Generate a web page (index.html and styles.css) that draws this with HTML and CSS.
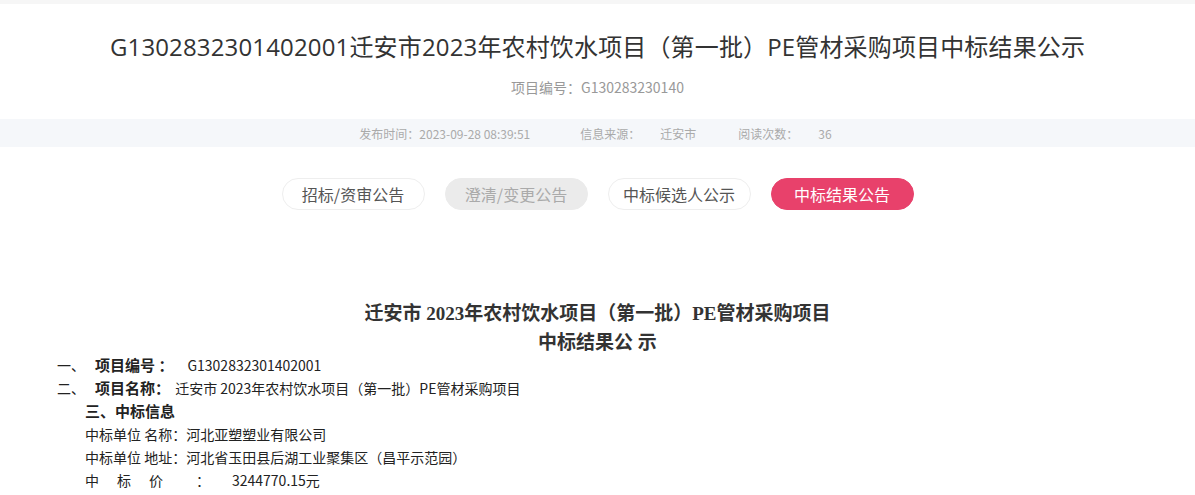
FILE: index.html
```html
<!DOCTYPE html>
<html lang="zh-CN">
<head>
  <meta charset="UTF-8">
  <meta name="viewport" content="width=device-width, initial-scale=1.0">
  <title>中标结果公示</title>
  <link rel="stylesheet" href="styles.css">
</head>
<body>
  <div class="topbar"></div>

  <header class="detail-head">
    <h1>G1302832301402001迁安市2023年农村饮水项目（第一批）PE管材采购项目中标结果公示</h1>
    <p class="proj-no">项目编号：G130283230140</p>
  </header>

  <div class="meta">
    <span class="meta-item">发布时间：2023-09-28 08:39:51</span>
    <span class="meta-item">信息来源：<em>迁安市</em></span>
    <span class="meta-item">阅读次数：<em>36</em></span>
  </div>

  <nav class="tabs">
    <a href="#">招标/资审公告</a>
    <a href="#" class="disabled">澄清/变更公告</a>
    <a href="#">中标候选人公示</a>
    <a href="#" class="active">中标结果公告</a>
  </nav>

  <main class="article">
    <h2>迁安市 2023年农村饮水项目（第一批）PE管材采购项目<br>中标结果公 示</h2>
    <p class="row"><span class="num">一、</span><b class="wide">项目编号 ：</b>G1302832301402001</p>
    <p class="row"><span class="num">二、</span><b>项目名称：</b> 迁安市 2023年农村饮水项目（第一批）PE管材采购项目</p>
    <p class="row sub"><b>三、中标信息</b></p>
    <p class="row sub">中标单位 名称：河北亚塑塑业有限公司</p>
    <p class="row sub">中标单位 地址：河北省玉田县后湖工业聚集区（昌平示范园）</p>
    <p class="row sub price"><span>中</span><span>标</span><span>价</span><span>：</span><span>3244770.15元</span></p>
  </main>
</body>
</html>
```

FILE: styles.css
```css
* { box-sizing: border-box; }
body { margin: 0; font-family: "Noto Sans CJK SC", sans-serif; color: #333; background: #fff; }
.topbar { height: 4px; background: #f6f6f6; }

.detail-head { text-align: center; padding-top: 26px; padding-bottom: 22px; }
.detail-head h1 { margin: 0; font-size: 24px; line-height: 34px; font-weight: normal; color: #333; letter-spacing: 0.15px; font-family: "Open Sans", "Noto Sans CJK SC", sans-serif; }
.proj-no { margin: 13px 0 0; font-size: 14px; line-height: 20px; color: #999; }

.meta { height: 28px; background: #f5f7fa; display: flex; justify-content: center; align-items: center; font-size: 12px; color: #aaa; padding-right: 4px; }
.meta-item + .meta-item { margin-left: 50px; }
.meta-item:last-child { margin-left: 42px; }
.meta-item em { font-style: normal; margin-left: 20px; }

.tabs { display: flex; justify-content: center; gap: 20px; margin-top: 31px; }
.tabs a { width: 143px; height: 32px; line-height: 30px; border: 1px solid #eee; border-radius: 16px; text-align: center; font-size: 16px; color: #555; text-decoration: none; background: #fff; }
.tabs a.disabled { background: #ebebeb; border-color: #ebebeb; color: #aaa; }
.tabs a.active { background: #e8416b; border-color: #e8416b; color: #fff; }

.article { padding: 89px 0 0 57px; font-size: 14px; color: #222; }
.article h2 { margin: 0 0 -3px -57px; text-align: center; font-size: 19px; line-height: 29px; font-family: "Liberation Serif", "Noto Sans CJK SC", serif; color: #333; }
.row { margin: 0; height: 23px; line-height: 23px; }
.row .num { margin-right: 10px; }
.row b { font-size: 15px; line-height: 1; margin-right: 2px; }
.row b.wide { margin-right: 14px; }
.sub { padding-left: 28px; }
.price { display: flex; }
.price span:nth-child(1), .price span:nth-child(2) { width: 32px; }
.price span:nth-child(3) { width: 47px; }
.price span:nth-child(4) { width: 36px; }
```
